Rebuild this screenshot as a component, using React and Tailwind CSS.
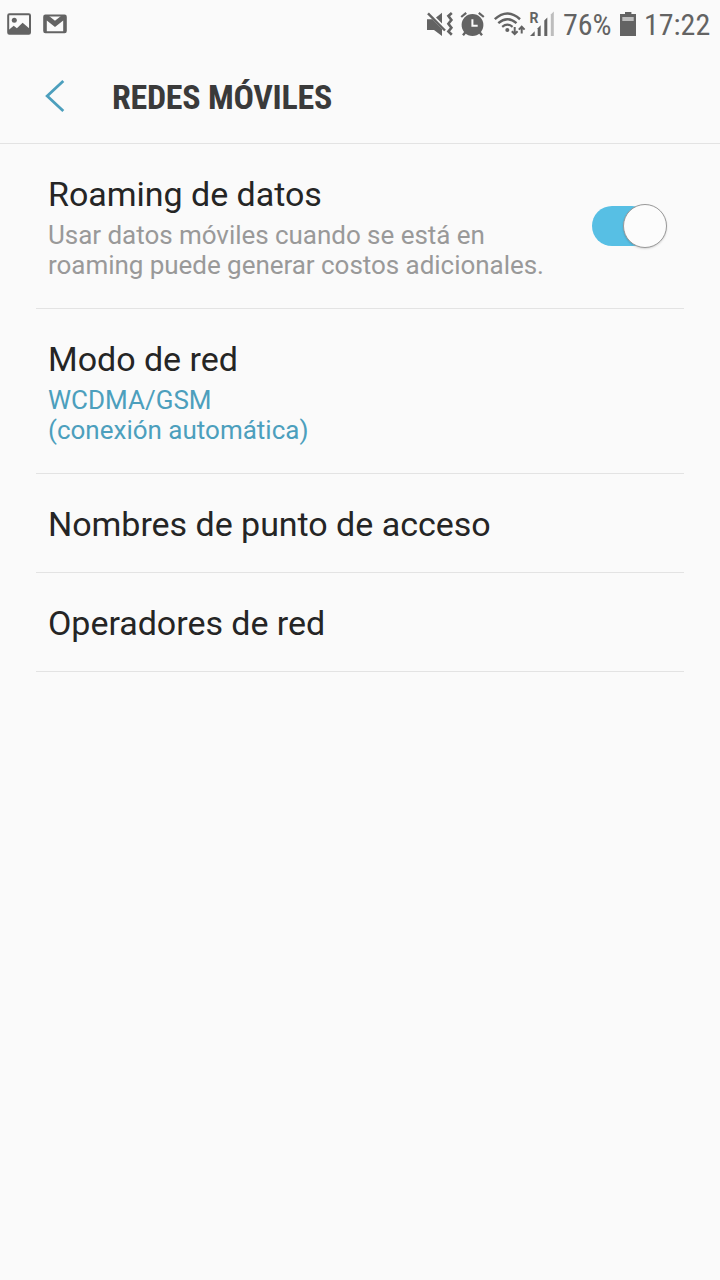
import React from 'react';

const settings = [
  {
    title: 'Roaming de datos',
    lines: ['Usar datos móviles cuando se está en', 'roaming puede generar costos adicionales.'],
    color: 'text-[#999999] tracking-[-0.04px]',
    toggle: true,
  },
  {
    title: 'Modo de red',
    lines: ['WCDMA/GSM', '(conexión automática)'],
    color: 'text-[#4c9fbd]',
  },
  { title: 'Nombres de punto de acceso' },
  { title: 'Operadores de red' },
];

function NotificationIcons() {
  return (
    <svg width="80" height="48" viewBox="0 0 80 48" fill="#636363">
      <rect x="8.2" y="14.2" width="21.8" height="19.6" rx="1.2" fill="none" stroke="#636363" strokeWidth="2" />
      <circle cx="14.3" cy="20.2" r="2.5" />
      <path d="M8 30.5l5.7-4.8 3.2 2.6 5.7-5.6 7.4 6.3v5H8z" />
      <rect x="44.2" y="15.6" width="21.6" height="16.6" rx="1.2" fill="none" stroke="#636363" strokeWidth="2" />
      <path d="M44 15.5h4.4l6.6 5.2 6.6-5.2H66v16.7h-2.8V20.6L55 27l-8.2-6.4v11.6H44z" />
    </svg>
  );
}

function SystemIcons() {
  return (
    <svg width="142" height="48" viewBox="420 0 142 48" fill="#636363">
      {/* muted speaker with vibration */}
      <path d="M427 19.2h5.3l9.7 9.8V36l-8-6h-7z" />
      <path d="M436 17.6l6-4.8v10.8z" />
      <path d="M428 13.3L445 30.5" fill="none" stroke="#636363" strokeWidth="2.4" />
      <path d="M451.8 13l-3.4 3 3 4-3 3.7 3 4-3 3.7 3.4 3.3" fill="none" stroke="#636363" strokeWidth="2.6" />
      {/* alarm */}
      <circle cx="472.5" cy="25" r="10.9" />
      <path d="M461.2 17l5-4.2M483.8 17l-5-4.2" fill="none" stroke="#636363" strokeWidth="2.2" />
      <path d="M465.4 32.3l-2.4 3M479.6 32.3l2.4 3" fill="none" stroke="#636363" strokeWidth="2.4" />
      <path d="M472.4 19.3v6.4h5.3" fill="none" stroke="#fafafa" strokeWidth="2" />
      {/* wifi with traffic arrows */}
      <g fill="none" stroke="#636363">
        <path d="M494.8 19.2Q507.3 7.8 520 19.2" strokeWidth="2.5" />
        <path d="M498.3 23.2Q507.3 15.2 516.5 23.2" strokeWidth="2.4" />
        <path d="M502.2 26.8Q507.3 22.6 512.6 26.8" strokeWidth="2.2" />
        <path d="M514.7 27v7M511.8 31.2l2.9 2.9 2.9-2.9M521.7 33.4v-6.6M518.8 29.6l2.9-2.9 2.9 2.9" strokeWidth="2" />
      </g>
      <circle cx="507.3" cy="30" r="2" />
      {/* signal */}
      <text x="529.4" y="23.3" fontSize="14" fontWeight="700" fontFamily="Roboto, sans-serif">R</text>
      <path d="M530 36l4.7-4.7V36z" />
      <path d="M537.7 28.2l3-3V36h-3z" />
      <path d="M544.3 20.6l3-3V36h-3z" />
      <path d="M550.8 14.5l3-3V36h-3z" fill="#bdbdbd" />
    </svg>
  );
}

function StatusBar() {
  return (
    <div className="flex h-12 justify-between text-[#636363]">
      <NotificationIcons />
      <div className="flex">
        <SystemIcons />
        <div className="w-[58px] pl-[1px]">
          <span className="block text-[30px] leading-[50px] font-['Roboto_Condensed',Roboto,sans-serif] font-stretch-condensed">76%</span>
        </div>
        <svg width="24" height="48" viewBox="620 0 24 48">
          <path d="M625 12h6.4v2h4.6v22h-16V14h5z" fill="#636363" />
          <path d="M622.3 17h11.4v4h-11.4z" fill="#bdbdbd" />
        </svg>
        <div className="w-[76px]">
          <span className="block text-[30px] leading-[50px] font-['Roboto_Condensed',Roboto,sans-serif] font-stretch-condensed">17:22</span>
        </div>
      </div>
    </div>
  );
}

function Toggle() {
  return (
    <button className="mt-[60px] mr-[17px] flex h-11 w-[75px] shrink-0 items-center" aria-pressed="true">
      <span className="flex h-10 w-[60px] items-center rounded-full bg-[#57bfe4] pl-[31px]">
        <span className="size-11 shrink-0 rounded-full border border-[#999999] bg-[#fcfcfc] shadow-[0_1px_2px_rgba(0,0,0,0.15)]" />
      </span>
    </button>
  );
}

function SettingRow({ title, lines, color, toggle }) {
  return (
    <div className="flex justify-between border-b border-[#e3e3e3]">
      <div className="pt-[30px] pb-7 pl-3">
        <h2 className="text-[34px] leading-10 tracking-[-0.03px] whitespace-nowrap text-[#252525]">{title}</h2>
        {lines && (
          <p className={`mt-1.5 text-[26px] leading-[30px] whitespace-nowrap ${color}`}>
            {lines.map((line) => (
              <span key={line} className="block">{line}</span>
            ))}
          </p>
        )}
      </div>
      {toggle && <Toggle />}
    </div>
  );
}

export default function App() {
  return (
    <div className="h-[1280px] w-[720px] overflow-hidden bg-[#fafafa] font-[Roboto,sans-serif]">
      <StatusBar />
      <header className="flex h-24 items-center border-b border-[#e3e3e3]">
        <svg className="ml-11 shrink-0" width="22" height="34" viewBox="0 0 22 34" fill="none" stroke="#4c9fbd" strokeWidth="2.8">
          <path d="M19.3 2L3.2 17l16.1 15" />
        </svg>
        <h1 className="ml-[46px] pt-0.5 text-[34px] leading-10 font-bold tracking-[-0.28px] whitespace-nowrap text-[#3a3a3a] font-['Roboto_Condensed',Roboto,sans-serif] font-stretch-condensed">
          REDES MÓVILES
        </h1>
      </header>
      <main className="px-9">
        {settings.map((item) => (
          <SettingRow key={item.title} {...item} />
        ))}
      </main>
    </div>
  );
}
